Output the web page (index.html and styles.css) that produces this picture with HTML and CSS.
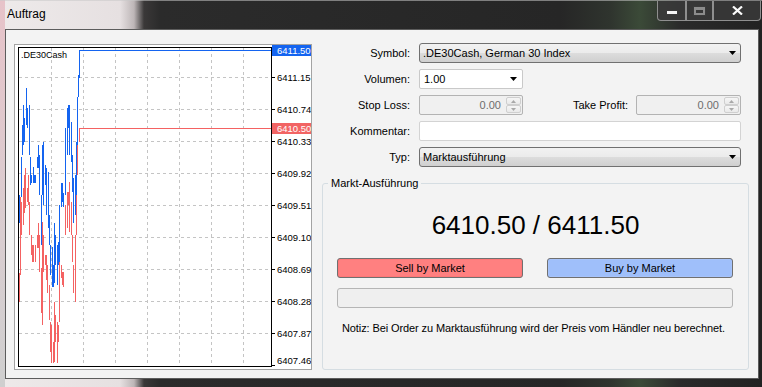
FILE: index.html
```html
<!DOCTYPE html>
<html lang="de">
<head>
<meta charset="utf-8">
<title>Auftrag</title>
<link rel="stylesheet" href="styles.css">
</head>
<body>
<div class="window">
  <div class="titlebar">
    <span class="title">Auftrag</span>
    <div class="caption-buttons">
      <span class="cbtn cbtn-min"><span class="min-glyph"></span></span>
      <span class="cbtn cbtn-max"><span class="max-glyph"></span></span>
      <span class="cbtn cbtn-close">
        <svg width="11" height="9" viewBox="0 0 11 9"><path d="M1 0.5L10 8.5M10 0.5L1 8.5" stroke="#3a3a3a" stroke-width="3.6"/><path d="M1 0.5L10 8.5M10 0.5L1 8.5" stroke="#fafafa" stroke-width="2.2"/></svg>
      </span>
    </div>
  </div>
  <div class="client">
    <div class="chart-panel">
      <svg class="chart" width="296" height="324" viewBox="0 0 296 324">
        <g transform="translate(-15,-45)">
          <g class="grid" stroke="#c4c4c4" stroke-width="1" stroke-dasharray="3 3" fill="none">
            <path d="M19 77.5H271M19 109.5H271M19 141.5H271M19 173.5H271M19 205.5H271M19 237.5H271M19 269.5H271M19 301.5H271M19 333.5H271"/>
            <path d="M51.5 48V366M83.5 48V366M115.5 48V366M147.5 48V366M179.5 48V366M211.5 48V366M243.5 48V366"/>
          </g>
          <path shape-rendering="crispEdges" d="M19.5 273V302M20.5 197V275M21.5 202V235M23.5 188V225M24.5 175V213M25.5 168V208M27.5 188V202M28.5 175V205M29.5 202V235M31.5 235V255M32.5 245V262M33.5 245V262M35.5 245V262M37.5 235V248M38.5 223V248M39.5 235V272M41.5 268V313M42.5 222V325M43.5 235V272M45.5 255V265M46.5 255V280M47.5 265V293M49.5 285V320M50.5 322V352M51.5 325V363M53.5 342V363M54.5 302V362M55.5 315V342M57.5 322V363M58.5 325V342M59.5 262V322M61.5 265V278M62.5 272V285M63.5 272V287M65.5 205V235M67.5 192V228M68.5 192V205M69.5 182V232M71.5 202V235M72.5 235V262M73.5 265V293M75.5 235V302M76.5 175V235M77.5 142V175M79.5 128V142M80 128.5H271" stroke="#f46262" stroke-width="1" fill="none"/>
          <path shape-rendering="crispEdges" d="M19.5 195V223M21.5 157V197M22.5 125V155M23.5 105V145M24.5 118V142M26.5 88V125M27.5 108V128M29.5 105V155M30.5 157V185M31.5 175V183M33.5 167V183M34.5 175V183M35.5 175V183M37.5 157V168M38.5 145V168M39.5 155V195M41.5 195V245M42.5 145V195M43.5 142V205M45.5 165V185M46.5 168V215M48.5 172V228M49.5 215V245M50.5 245V275M52.5 247V287M53.5 265V287M54.5 223V283M55.5 235V265M57.5 245V285M58.5 242V265M59.5 205V262M61.5 183V207M62.5 183V202M63.5 193V207M65.5 128V195M67.5 108V155M68.5 105V128M69.5 105V155M71.5 122V162M72.5 155V192M73.5 178V223M75.5 175V215M76.5 142V195M77.5 97V145M78.5 75V97M79.5 50V78M80 50.5H271" stroke="#1464f0" stroke-width="1" fill="none"/>
          <rect x="18.5" y="47.5" width="253" height="319" fill="none" stroke="#000" stroke-width="1"/>
          <path d="M272 77.5h3M272 109.5h3M272 141.5h3M272 173.5h3M272 205.5h3M272 237.5h3M272 269.5h3M272 301.5h3M272 333.5h3M272 365.5h3" stroke="#000" stroke-width="1"/>
          <text class="sym" x="21" y="58">.DE30Cash</text>
          <g class="axis">
            <text x="277" y="81">6411.15</text>
            <text x="277" y="113">6410.74</text>
            <text x="277" y="145">6410.33</text>
            <text x="277" y="177">6409.92</text>
            <text x="277" y="209">6409.51</text>
            <text x="277" y="241">6409.10</text>
            <text x="277" y="273">6408.69</text>
            <text x="277" y="305">6408.28</text>
            <text x="277" y="337">6407.87</text>
            <text x="277" y="364">6407.46</text>
          </g>
          <rect x="272" y="45" width="40" height="11" fill="#1464f0"/>
          <text class="tag" x="277" y="54">6411.50</text>
          <rect x="272" y="123" width="40" height="11" fill="#f26464"/>
          <text class="tag" x="277" y="132">6410.50</text>
        </g>
      </svg>
    </div>
    <div class="form-side">
      <div class="form-grid">
        <span class="lbl">Symbol:</span>
        <div class="select"><span class="select-text">.DE30Cash, German 30 Index</span><svg class="arrow" width="7" height="4" viewBox="0 0 7 4"><path d="M0 0H7L3.5 4Z" fill="#000"/></svg></div>

        <span class="lbl">Volumen:</span>
        <div class="field-row"><div class="combo"><span class="select-text">1.00</span><svg class="arrow" width="7" height="4" viewBox="0 0 7 4"><path d="M0 0H7L3.5 4Z" fill="#000"/></svg></div></div>

        <span class="lbl">Stop Loss:</span>
        <div class="field-row">
          <div class="spin spin-sl"><span class="spin-val">0.00</span><span class="spin-btns"><span class="spin-b"><svg width="5" height="3" viewBox="0 0 5 3"><path d="M0 3H5L2.5 0Z" fill="#a8a8a8"/></svg></span><span class="spin-b"><svg width="5" height="3" viewBox="0 0 5 3"><path d="M0 0H5L2.5 3Z" fill="#a8a8a8"/></svg></span></span></div>
          <span class="lbl lbl-tp">Take Profit:</span>
          <div class="spin spin-tp"><span class="spin-val">0.00</span><span class="spin-btns"><span class="spin-b"><svg width="5" height="3" viewBox="0 0 5 3"><path d="M0 3H5L2.5 0Z" fill="#a8a8a8"/></svg></span><span class="spin-b"><svg width="5" height="3" viewBox="0 0 5 3"><path d="M0 0H5L2.5 3Z" fill="#a8a8a8"/></svg></span></span></div>
        </div>

        <span class="lbl">Kommentar:</span>
        <div class="textbox"></div>

        <span class="lbl">Typ:</span>
        <div class="select"><span class="select-text">Marktausführung</span><svg class="arrow" width="7" height="4" viewBox="0 0 7 4"><path d="M0 0H7L3.5 4Z" fill="#000"/></svg></div>
      </div>

      <div class="group">
        <div class="group-title">Markt-Ausführung</div>
        <div class="price">6410.50 / 6411.50</div>
        <div class="btn-row">
          <div class="btn btn-sell">Sell by Market</div>
          <div class="btn btn-buy">Buy by Market</div>
        </div>
        <div class="progress"></div>
        <p class="note">Notiz: Bei Order zu Marktausführung wird der Preis vom Händler neu berechnet.</p>
      </div>
    </div>
  </div>
</div>
</body>
</html>
```

FILE: styles.css
```css
* { box-sizing: border-box; }

body {
  margin: 0;
  background: #262626;
  font-family: "Liberation Sans", Arial, sans-serif;
  font-size: 11px;
  color: #000;
}

.window {
  width: 762px;
  height: 387px;
  display: flex;
  flex-direction: column;
  overflow: hidden;
  background:
    linear-gradient(#e7c3c9, #d9cdd0 60%, #cfcfcf) 0 0 / 5px 100% no-repeat,
    linear-gradient(to right, #eeeaea 0, #e6e0e1 120px, #bdb6b7 134px, #3a3838 144px, #2b2b2b 160px, #262626 560px, #2f342e 610px, #3b4a38 640px, #2a2a2a 680px, #222 100%);
}

.titlebar {
  height: 29px;
  flex: none;
  display: flex;
  align-items: flex-start;
  border-top: 1px solid rgba(200, 200, 200, 0.55);
}

.title {
  font-size: 12px;
  line-height: 14px;
  padding: 6px 0 0 7px;
  color: #000;
}

.caption-buttons {
  margin-left: auto;
  margin-right: 1px;
  display: flex;
}

.cbtn {
  height: 20px;
  display: flex;
  align-items: center;
  justify-content: center;
  border: 1px solid #8f8f8f;
  border-top: none;
  background: rgba(58, 58, 58, 0.85);
}

.cbtn + .cbtn { border-left: none; }

.cbtn-min { width: 29px; border-bottom-left-radius: 4px; }
.cbtn-max { width: 27px; border-left: 1px solid #8f8f8f !important; }
.cbtn-close { width: 48px; border-bottom-right-radius: 4px; border-left: 1px solid #8f8f8f !important; }

.min-glyph {
  width: 10px;
  height: 3px;
  margin-top: 4px;
  background: #f4f4f4;
  box-shadow: 0 0 0 1px #3a3a3a;
}

.max-glyph {
  width: 11px;
  height: 8px;
  border: 2px solid #8c8c8c;
  border-top-width: 3px;
  box-shadow: 0 0 0 1px #3a3a3a;
}

.cbtn-close svg { display: block; }

.client {
  margin: 0 3px 0 5px;
  height: 350px;
  flex: none;
  border: 1px solid #5c5c5c;
  background: #f3f3f3;
  display: flex;
  align-items: flex-start;
}

.chart-panel {
  margin: 14px 0 0 8px;
  width: 298px;
  height: 326px;
  border: 1px solid #a3a3a3;
  background: #fff;
  flex: none;
}

.chart { display: block; }

.chart text {
  font-family: "Liberation Sans", Arial, sans-serif;
  font-size: 9.5px;
  fill: #000;
}

.chart text.sym { font-size: 9px; }

.chart text.tag { fill: #fff; }

.form-side {
  flex: 1;
  margin-top: 13px;
  display: flex;
  flex-direction: column;
}

.form-grid {
  display: grid;
  grid-template-columns: 98px 322px;
  grid-auto-rows: 20px;
  column-gap: 9px;
  row-gap: 6px;
  align-items: stretch;
}

.lbl {
  text-align: right;
  line-height: 20px;
  white-space: nowrap;
}

.select {
  display: flex;
  align-items: center;
  height: 20px;
  border: 1px solid #707070;
  border-radius: 3px;
  background: linear-gradient(#f2f2f2 0, #ebebeb 50%, #dddddd 50%, #cfcfcf 100%);
  padding: 0 4px 0 3px;
}

.select-text { flex: 1; line-height: 18px; white-space: nowrap; }

.arrow { display: block; flex: none; }

.field-row {
  display: flex;
  align-items: stretch;
}

.combo {
  width: 104px;
  display: flex;
  align-items: center;
  border: 1px solid #c9c9c9;
  border-radius: 2px;
  background: #fff;
  padding: 0 5px 0 4px;
}

.spin {
  display: flex;
  align-items: stretch;
  border: 1px solid #b3b3b3;
  border-radius: 2px;
  background: #f0f0f0;
  padding: 1px;
}

.spin-sl { width: 104px; }
.spin-tp { width: 105px; }

.spin-val {
  flex: 1;
  text-align: right;
  line-height: 16px;
  color: #6d6d6d;
  padding-right: 5px;
}

.spin-btns {
  width: 15px;
  display: flex;
  flex-direction: column;
}

.spin-b {
  flex: 1;
  display: flex;
  align-items: center;
  justify-content: center;
  border: 1px solid #cfcfcf;
  border-radius: 2px;
  background: linear-gradient(#f6f6f6, #e9e9e9);
}

.spin-b svg { display: block; }

.lbl-tp {
  flex: 1;
  padding-right: 8px;
}

.textbox {
  border: 1px solid #d3d3d3;
  border-radius: 2px;
  background: #fff;
}

.group {
  margin: 16px 0 0 10px;
  width: 427px;
  height: 187px;
  border: 1px solid #d5dde2;
  border-radius: 3px;
  display: flex;
  flex-direction: column;
}

.group-title {
  margin: -7px 0 0 5px;
  padding: 0 3px;
  line-height: 13px;
  background: #f3f3f3;
  align-self: flex-start;
}

.price {
  margin-top: 20px;
  font-size: 26px;
  line-height: 30px;
  text-align: center;
}

.btn-row {
  margin-top: 18px;
  padding-left: 14px;
  display: flex;
  gap: 24px;
}

.btn {
  width: 186px;
  height: 20px;
  border: 1px solid #707070;
  border-radius: 3px;
  text-align: center;
  line-height: 18px;
}

.btn-sell { background: #ff8080; box-shadow: inset 0 0 0 1px #f77; }
.btn-buy { background: #9fbffa; box-shadow: inset 0 0 0 1px #a6c3fb; }

.progress {
  margin: 10px 0 0 14px;
  width: 396px;
  height: 20px;
  border: 1px solid #b5b5b5;
  border-radius: 3px;
  background: #efefef;
}

.note {
  margin: 14px 0 0 19px;
  line-height: 13px;
  white-space: nowrap;
  letter-spacing: -0.1px;
}
```
